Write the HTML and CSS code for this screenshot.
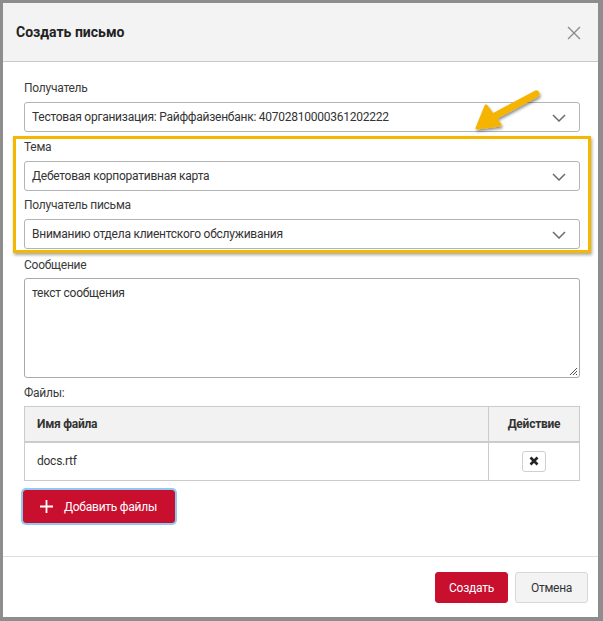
FILE: index.html
```html
<!DOCTYPE html>
<html lang="ru">
<head>
<meta charset="utf-8">
<title>Создать письмо</title>
<link rel="stylesheet" href="styles.css">
</head>
<body>
<div class="dialog">
  <div class="dlg-header">
    <h1 class="dlg-title">Создать письмо</h1>
    <span class="dlg-close"><svg width="14" height="14" viewBox="0 0 14 14"><path d="M1 1L13 13M13 1L1 13" stroke="#8a8a8a" stroke-width="1.3" fill="none"/></svg></span>
  </div>
  <div class="dlg-body">
    <div class="field first">
      <div class="label">Получатель</div>
      <div class="select"><span>Тестовая организация: Райффайзенбанк: 40702810000361202222</span><svg class="chev" width="14" height="8" viewBox="0 0 14 8"><path d="M1 1L7 7L13 1" stroke="#6b6b6b" stroke-width="1.5" fill="none"/></svg></div>
    </div>
    <div class="highlight">
      <div class="field">
        <div class="label">Тема</div>
        <div class="select"><span>Дебетовая корпоративная карта</span><svg class="chev" width="14" height="8" viewBox="0 0 14 8"><path d="M1 1L7 7L13 1" stroke="#6b6b6b" stroke-width="1.5" fill="none"/></svg></div>
      </div>
      <div class="field second">
        <div class="label">Получатель письма</div>
        <div class="select"><span>Вниманию отдела клиентского обслуживания</span><svg class="chev" width="14" height="8" viewBox="0 0 14 8"><path d="M1 1L7 7L13 1" stroke="#6b6b6b" stroke-width="1.5" fill="none"/></svg></div>
      </div>
    </div>
    <div class="field msg">
      <div class="label">Сообщение</div>
      <div class="textarea">текст сообщения<svg class="grip" width="10" height="10" viewBox="0 0 10 10"><path d="M9 2L2 9M9 5L5 9M9 8L8 9" stroke="#555" stroke-width="1" fill="none"/></svg></div>
    </div>
    <div class="field files">
      <div class="label">Файлы:</div>
      <table class="ftable">
        <thead><tr><th class="c-name">Имя файла</th><th class="c-act">Действие</th></tr></thead>
        <tbody><tr><td class="c-name">docs.rtf</td><td class="c-act"><span class="del"><svg width="10" height="10" viewBox="0 0 10 10"><path d="M1.5 1.5L8.5 8.5M8.5 1.5L1.5 8.5" stroke="#222" stroke-width="2.6" fill="none"/></svg></span></td></tr></tbody>
      </table>
    </div>
    <div class="add-wrap"><button class="btn-add"><svg width="13" height="13" viewBox="0 0 13 13"><path d="M6.5 0V13M0 6.5H13" stroke="#fff" stroke-width="1.8" fill="none"/></svg><span>Добавить файлы</span></button></div>
  </div>
  <div class="dlg-footer">
    <button class="btn btn-primary">Создать</button>
    <button class="btn btn-default">Отмена</button>
  </div>
  <svg class="arrow" width="90" height="60" viewBox="0 0 90 60">
    <defs><filter id="sh" x="-20%" y="-20%" width="140%" height="140%"><feDropShadow dx="1" dy="2" stdDeviation="1.5" flood-color="#000" flood-opacity="0.45"/></filter></defs>
    <g filter="url(#sh)">
      <path d="M79 11L36 34" stroke="#f5b400" stroke-width="7" stroke-linecap="round" fill="none"/>
      <path d="M20 45L29 23L43 42Z" fill="#f5b400" stroke="#f5b400" stroke-width="3" stroke-linejoin="round"/>
    </g>
  </svg>
</div>
</body>
</html>
```
FILE: styles.css
```css
html, body {
  margin: 0;
  padding: 0;
}
* { box-sizing: border-box; }
body {
  background: #8d8d8d;
  font-family: Roboto, "Noto Sans", sans-serif;
  font-size: 12px;
  letter-spacing: -0.25px;
  color: #333;
  width: 603px;
  height: 621px;
  overflow: hidden;
}
.dialog {
  position: relative;
  margin: 3px 0 0 3px;
  width: 595px;
  height: 614px;
  background: #fff;
  display: flex;
  flex-direction: column;
}
.dlg-header {
  height: 59px;
  background: #f3f3f3;
  border-bottom: 1px solid #c9c9c9;
  display: flex;
  align-items: center;
  justify-content: space-between;
  padding: 0 17px 0 13px;
}
.dlg-title {
  margin: 0;
  font-size: 14px;
  letter-spacing: 0;
  font-weight: 700;
  color: #222;
}
.dlg-close {
  display: flex;
  padding-top: 1px;
}
.dlg-body {
  padding: 18px 18px 0 21px;
  flex: 1;
}
.label {
  line-height: 16px;
  color: #3a3a3a;
}
.select {
  margin-top: 6px;
  height: 30px;
  border: 1px solid #b4b4b4;
  border-radius: 3px;
  display: flex;
  align-items: center;
  justify-content: space-between;
  padding: 0 13px 0 7px;
  color: #333;
}
.chev { margin-top: 1px; }
.highlight {
  margin: 4px -11px 0 -11px;
  padding: 0 8px 1px 8px;
  border: 3px solid #f5b800;
  box-shadow: 1px 2px 3px rgba(0,0,0,0.35);
}
.second { margin-top: 6px; }
.msg { margin-top: 4px; }
.textarea {
  position: relative;
  margin-top: 5px;
  height: 100px;
  border: 1px solid #a9a9a9;
  border-radius: 3px;
  padding: 7px 7px;
}
.grip { position: absolute; right: 1px; bottom: 1px; }
.files { margin-top: 7px; }
.ftable {
  margin-top: 5px;
  width: 100%;
  border-collapse: collapse;
  border: 1px solid #cbcbcb;
}
.ftable th {
  background: #f2f2f2;
  height: 35px;
  font-weight: 700;
  text-align: left;
  color: #333;
  border-bottom: 2px solid #cbcbcb;
  padding: 0 12px;
}
.ftable td {
  height: 39px;
  padding: 0 12px;
}
.ftable .c-act {
  width: 91px;
  text-align: center;
  border-left: 1px solid #cbcbcb;
}
.del {
  display: inline-flex;
  align-items: center;
  justify-content: center;
  width: 24px;
  height: 21px;
  border: 1px solid #cfcfcf;
  border-radius: 3px;
  background: #fff;
  vertical-align: middle;
}
.add-wrap { margin-top: 9px; }
.btn-add {
  display: inline-flex;
  align-items: center;
  gap: 11px;
  height: 33px;
  width: 152px;
  padding: 0 0 0 16px;
  margin-left: -1px;
  background: #c8102e;
  color: #fff;
  border: 1px solid #c8102e;
  border-radius: 3px;
  box-shadow: 0 0 0 2px #8ec9f5;
  font-family: inherit;
  font-size: 12px;
  letter-spacing: -0.25px;
  font-weight: 400;
}
.dlg-footer {
  height: 61px;
  border-top: 1px solid #dedede;
  display: flex;
  justify-content: flex-end;
  align-items: flex-start;
  gap: 7px;
  padding: 15px 10px 0 0;
}
.btn {
  height: 31px;
  width: 73px;
  border-radius: 3px;
  font-family: inherit;
  font-size: 12px;
  letter-spacing: -0.25px;
}
.btn-primary {
  background: #c8102e;
  border: 1px solid #c8102e;
  color: #fff;
}
.btn-default {
  background: #f3f3f3;
  border: 1px solid #d8d8d8;
  color: #333;
}
.arrow {
  position: absolute;
  left: 454px;
  top: 80px;
}
```
